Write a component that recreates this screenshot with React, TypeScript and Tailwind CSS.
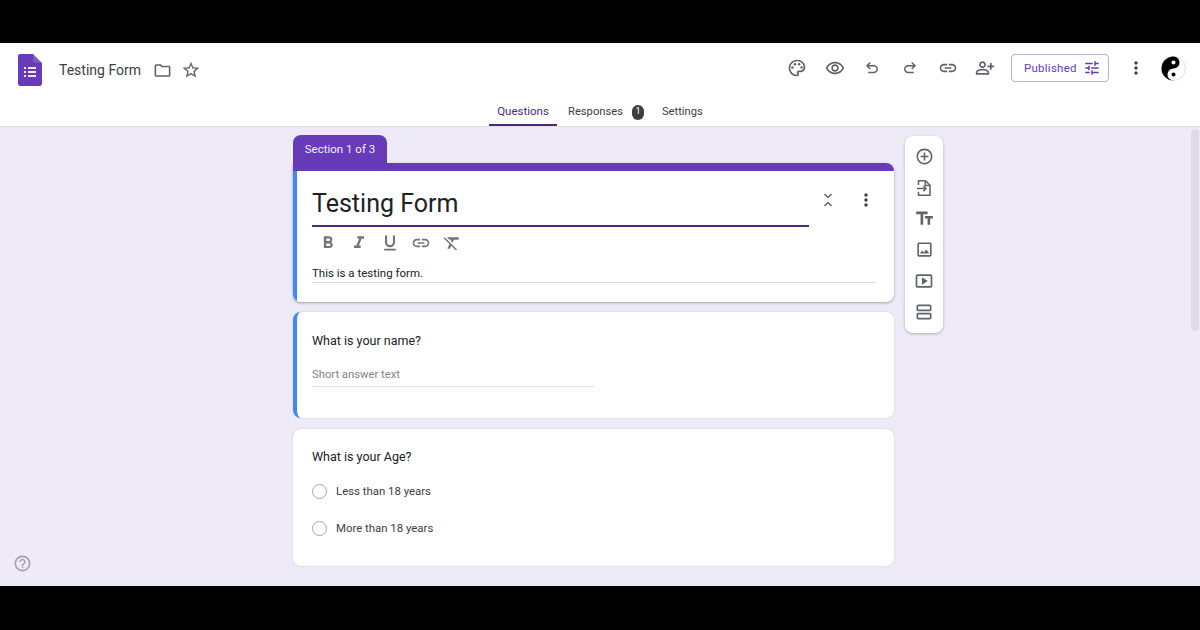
import {
  MdAddCircleOutline,
  MdFormatBold,
  MdFormatClear,
  MdFormatItalic,
  MdFormatUnderlined,
  MdHelpOutline,
  MdLink,
  MdMoreVert,
  MdOutlineFolder,
  MdOutlineImage,
  MdOutlinePalette,
  MdOutlinePersonAddAlt,
  MdOutlineRemoveRedEye,
  MdOutlineSmartDisplay,
  MdOutlineViewAgenda,
  MdStarBorder,
  MdTextFields,
  MdTune,
} from 'react-icons/md'

function FormsLogo() {
  return (
    <svg width="24" height="32" viewBox="0 0 24 32">
      <path d="M15 0H2.2C1 0 0 1 0 2.2v27.6C0 31 1 32 2.2 32h19.600c1.200 0 2.200-1 2.200-2.200V9l-6-3z" fill="#673ab7" />
      <path d="M15 0v6.800c0 1.200 1 2.200 2.200 2.200H24z" fill="#7e57c2" />
      <path d="M6 13h2v2H6zm4 0h8v2h-8zM6 17h2v2H6zm4 0h8v2h-8zM6 21h2v2H6zm4 0h8v2h-8z" fill="#f1eaf9" />
    </svg>
  )
}

function YinYang() {
  return (
    <svg width="25" height="25" viewBox="0 0 100 100">
      <circle cx="50" cy="50" r="48" fill="#fff" stroke="#bbb" strokeWidth="2" />
      <path d="M50 2A24 24 0 0 1 50 50A24 24 0 0 0 50 98A48 48 0 0 1 50 2z" fill="#000" />
      <circle cx="50" cy="26" r="8" fill="#fff" />
      <circle cx="50" cy="74" r="8" fill="#000" />
    </svg>
  )
}

function UndoIcon({ flip }: { flip?: boolean }) {
  return (
    <svg width="18" height="18" viewBox="0 0 24 24" fill="currentColor" className={flip ? '-scale-x-100' : ''}>
      <path d="M7 19v-2h7.100q1.575 0 2.738-1T18 13.500q0-1.500-1.162-2.500T14.100 10H7.800l2.600 2.600L9 14 4 9l5-5 1.400 1.400L7.800 8h6.300q2.425 0 4.163 1.575T20 13.500q0 2.350-1.737 3.925T14.100 19z" />
    </svg>
  )
}

function ImportIcon() {
  return (
    <svg width="20" height="20" viewBox="0 0 20 20" fill="none" stroke="#5f6368" strokeWidth="1.500">
      <path d="M4.500 7V2.800h7l4.500 4.500v9.900H4.500V14" />
      <path d="M11.300 3v4.500H16" />
      <path d="M3 10.500h9M9.300 7.800l2.800 2.700-2.800 2.700" />
    </svg>
  )
}

function CollapseIcon() {
  return (
    <svg width="16" height="20" viewBox="0 0 16 20" fill="none" stroke="#5f6368" strokeWidth="1.500">
      <path d="M4.500 4l3.500 3.500 3.500-3.500M4.500 16l3.500-3.500 3.500 3.500" />
    </svg>
  )
}

function Radio({ label }: { label: string }) {
  return (
    <div className="flex h-[37px] items-center">
      <div className="h-[15px] w-[15px] rounded-full border border-[#a8a8a8]" />
      <span className="ml-[9px] text-[11.400px] text-[#3c4043]">{label}</span>
    </div>
  )
}

export default function App() {
  return (
    <div className="flex h-[630px] w-[1200px] flex-col overflow-hidden bg-black font-['Roboto',sans-serif]">
      <div className="relative mt-[43px] flex h-[543px] flex-col bg-[#eeeaf8]">
        <header className="h-[84px] shrink-0 border-b border-[#e0e0e0] bg-white">
          <div className="flex h-[52px] items-center pl-[18px] pr-[14px] pt-[2px]">
            <FormsLogo />
            <span className="ml-[17px] text-[14px] text-[#3c4043]">Testing Form</span>
            <MdOutlineFolder className="ml-[12px] text-[#5f6368]" size={19} />
            <MdStarBorder className="ml-[9px] text-[#5f6368]" size={20} />
            <div className="-mt-[4px] ml-auto flex items-center">
              <div className="flex items-center text-[#5f6368]">
                <div className="flex w-[37.600px] justify-center"><MdOutlinePalette size={20} /></div>
                <div className="flex w-[37.600px] justify-center"><MdOutlineRemoveRedEye size={20} /></div>
                <div className="flex w-[37.600px] justify-center"><UndoIcon /></div>
                <div className="flex w-[37.600px] justify-center"><UndoIcon flip /></div>
                <div className="flex w-[37.600px] justify-center"><MdLink size={20} /></div>
                <div className="flex w-[37.600px] justify-center"><MdOutlinePersonAddAlt size={20} /></div>
              </div>
              <div className="ml-[7px] flex h-[28px] w-[98px] items-center rounded-[4px] border border-[#b9aed0] pl-[12px] text-[11.500px] tracking-[0.25px] text-[#673ab7]">
                <span className="pt-[1px]">Published</span>
                <MdTune className="ml-[6px]" size={18} />
              </div>
              <MdMoreVert className="ml-[17px] text-[#3c4043]" size={20} />
              <div className="ml-[15px]">
                <YinYang />
              </div>
            </div>
          </div>
          <nav className="flex h-[31px] pl-[489px] text-[11.500px] text-[#3c4043]">
            <div className="flex w-[68px] items-center justify-center border-b-2 border-[#4a2a7f] pt-[5px] text-[#4a2a7f]">Questions</div>
            <div className="ml-[11px] flex items-center pt-[3px]">
              <span className="text-[11.200px]">Responses</span>
              <span className="ml-[9px] flex h-[15px] w-[12px] items-center justify-center rounded-full bg-[#3c4043] text-[9px] text-white">1</span>
            </div>
            <div className="ml-[18px] flex items-center pt-[3px] text-[11.200px]">Settings</div>
          </nav>
        </header>

        <main className="flex flex-1 gap-[11px] pl-[293px] pt-[8px]">
          <div className="w-[601px]">
            <div className="h-[28px] w-[94px] rounded-t-[8px] bg-[#673ab7] text-center text-[11.500px] leading-[29px] text-[#f3eefb]">Section 1 of 3</div>
            <div className="relative h-[139px] overflow-hidden rounded-[8px] rounded-tl-none bg-white shadow-[0_1px_3px_rgba(60,64,67,0.45)]">
              <div className="h-[8px] bg-[#673ab7]" />
              <div className="h-[131px] border-l-[4px] border-[#4285f4] pl-[15px] pr-[19px]">
                <div className="flex h-[56px] w-[497px] items-end border-b-2 border-[#4a2a7f] pb-[3px] text-[25px] leading-[36px] text-[#202124]">Testing Form</div>
                <div className="mt-[5px] flex h-[22px] items-center gap-[11px] pl-[6px] text-[#757575]">
                  <MdFormatBold size={20} />
                  <MdFormatItalic size={20} />
                  <MdFormatUnderlined size={20} />
                  <MdLink size={20} />
                  <MdFormatClear size={20} />
                </div>
                <div className="mt-[10px] h-[19px] border-b border-[#dadce0] text-[11.500px] leading-[18px] text-[#202124]">This is a testing form.</div>
              </div>
              <div className="absolute right-[18px] top-[27px] flex items-center gap-[20px]">
                <CollapseIcon />
                <MdMoreVert className="text-[#3c4043]" size={20} />
              </div>
            </div>

            <div className="mt-[10px] h-[106px] rounded-[8px] border-l-[4px] border-[#4285f4] bg-white pl-[15px] shadow-[0_0_2px_rgba(60,64,67,0.2)]">
              <div className="pt-[20px] text-[12.500px] leading-[18px] text-[#202124]">What is your name?</div>
              <div className="mt-[16px] h-[21px] w-[282px] border-b border-dotted border-[#cfcfcf] text-[11.250px] leading-[18px] text-[#80868b]">Short answer text</div>
            </div>

            <div className="mt-[11px] h-[137px] rounded-[8px] bg-white pl-[19px] shadow-[0_0_2px_rgba(60,64,67,0.2)]">
              <div className="pt-[19px] text-[12.500px] leading-[18px] text-[#202124]">What is your Age?</div>
              <div className="mt-[7px]">
                <Radio label="Less than 18 years" />
                <Radio label="More than 18 years" />
              </div>
            </div>
          </div>

          <aside className="mt-[1px] flex h-[197px] w-[38px] flex-col items-center rounded-[8px] bg-white pt-[5px] text-[#5f6368] shadow-[0_1px_3px_rgba(60,64,67,0.35)]">
            <div className="flex h-[31px] items-center"><MdAddCircleOutline size={19} /></div>
            <div className="flex h-[31px] items-center"><ImportIcon /></div>
            <div className="flex h-[31px] items-center"><MdTextFields size={21} /></div>
            <div className="flex h-[31px] items-center"><MdOutlineImage size={19} /></div>
            <div className="flex h-[31px] items-center"><MdOutlineSmartDisplay size={20} /></div>
            <div className="flex h-[31px] items-center"><MdOutlineViewAgenda size={20} /></div>
          </aside>
        </main>

        <MdHelpOutline className="absolute left-[13px] top-[511px] text-[#a3a1ab]" size={19} />
        <div className="absolute right-[1px] top-[86px] h-[202px] w-[8px] rounded-full bg-[#dedbe6]" />
      </div>
    </div>
  )
}
